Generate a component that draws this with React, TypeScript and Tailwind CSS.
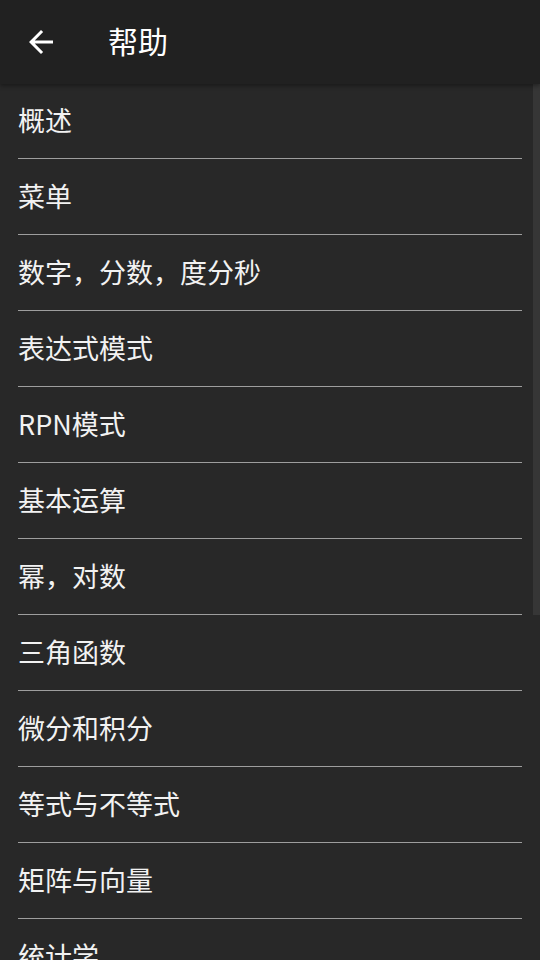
import React from "react";

const ITEMS = [
  "概述",
  "菜单",
  "数字，分数，度分秒",
  "表达式模式",
  "RPN模式",
  "基本运算",
  "幂，对数",
  "三角函数",
  "微分和积分",
  "等式与不等式",
  "矩阵与向量",
  "统计学",
  "复数",
];

export default function App() {
  return (
    <div
      className="relative w-[540px] h-[960px] overflow-hidden bg-[#282828] text-white"
      style={{ fontFamily: '"Noto Sans CJK SC", "Noto Sans", sans-serif' }}
    >
      {/* Header */}
      <div className="relative z-10 flex items-center h-[84px] bg-[#212121] shadow-[0_2px_4px_rgba(0,0,0,0.35)]">
        <div className="flex items-center justify-center w-[36px] h-[36px] ml-[23px]">
          <svg viewBox="0 0 24 24" width="36" height="36" fill="#ffffff">
            <path d="M20 11H7.83l5.59-5.59L12 4l-8 8 8 8 1.41-1.41L7.83 13H20v-2z" />
          </svg>
        </div>
        <h1 className="ml-[49px] mb-[4px] text-[30px] leading-none font-normal text-white">帮助</h1>
      </div>

      {/* List */}
      <div className="-mt-px">
        {ITEMS.map((t) => (
          <div key={t} className="px-[18px]">
            <div className="flex items-center h-[76px] pb-[3px] border-b border-[#9e9e9e] text-[27px] leading-none text-[#f2f2f2]">
              {t}
            </div>
          </div>
        ))}
      </div>

      {/* Scrollbar */}
      <div className="absolute right-0 top-[84px] w-[7px] h-[531px] bg-[#363636]" />
    </div>
  );
}
